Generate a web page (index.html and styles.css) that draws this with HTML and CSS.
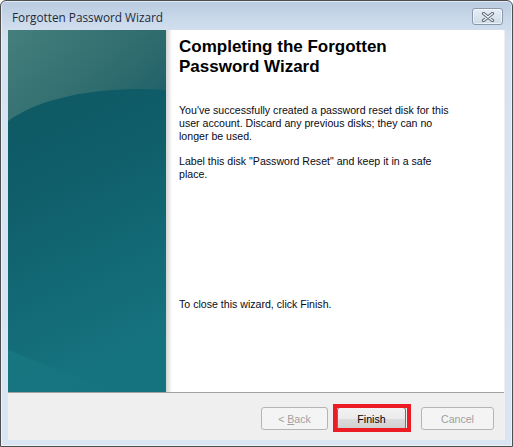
FILE: index.html
```html
<!DOCTYPE html>
<html>
<head>
<meta charset="utf-8">
<link rel="stylesheet" href="styles.css">
</head>
<body>
<div class="window">
  <div class="titlebar">
    <span class="title">Forgotten Password Wizard</span>
    <button class="close" aria-label="Close">
      <svg width="14" height="10" viewBox="0 0 14 10">
        <path d="M2.5 1.5 L11.5 8.5 M11.5 1.5 L2.5 8.5" stroke="#5a6470" stroke-width="3.2" stroke-linecap="round"/>
        <path d="M2.5 1.5 L11.5 8.5 M11.5 1.5 L2.5 8.5" stroke="#ffffff" stroke-width="1.2" stroke-linecap="round"/>
      </svg>
    </button>
  </div>
  <div class="client">
    <div class="main">
      <div class="banner">
        <svg width="158" height="362" viewBox="0 0 158 362">
          <defs>
            <linearGradient id="base" x1="0" y1="0" x2="0.2" y2="1">
              <stop offset="0" stop-color="#0d5660"/>
              <stop offset="0.45" stop-color="#0f5e6a"/>
              <stop offset="1" stop-color="#15737f"/>
            </linearGradient>
            <linearGradient id="gloss" x1="0" y1="0" x2="1" y2="0.6">
              <stop offset="0" stop-color="#447f7c"/>
              <stop offset="0.6" stop-color="#336f70"/>
              <stop offset="1" stop-color="#22636a"/>
            </linearGradient>
            <linearGradient id="low" x1="0" y1="0" x2="1" y2="1">
              <stop offset="0" stop-color="#1c8589" stop-opacity="0.45"/>
              <stop offset="1" stop-color="#167882" stop-opacity="0"/>
            </linearGradient>
          </defs>
          <rect width="158" height="362" fill="url(#base)"/>
          <path d="M0 0 H158 V60 C110 56 40 62 0 91 Z" fill="url(#gloss)"/>
          <path d="M0 320 C40 336 80 352 110 362 H0 Z" fill="url(#low)"/>
        </svg>
      </div>
      <div class="shade"></div>
      <div class="content">
        <h1 class="heading">Completing the Forgotten Password Wizard</h1>
        <p class="text">You've successfully created a password reset disk for this user account. Discard any previous disks; they can no longer be used.</p>
        <p class="text gap">Label this disk "Password Reset" and keep it in a safe place.</p>
        <p class="text closing">To close this wizard, click Finish.</p>
      </div>
    </div>
    <div class="footer">
      <button class="btn back" disabled>&lt; <u>B</u>ack</button>
      <button class="btn finish">Finish</button>
      <button class="btn cancel" disabled>Cancel</button>
      <div class="highlight"></div>
    </div>
  </div>
</div>
</body>
</html>
```

FILE: styles.css
```css
* { box-sizing: border-box; }
html, body { margin: 0; padding: 0; }
body {
  width: 513px;
  height: 447px;
  background: #ffffff;
  overflow: hidden;
}
.window {
  width: 513px;
  height: 447px;
  border: 1px solid #4e4e4e;
  border-radius: 6px 6px 0 0;
  background: linear-gradient(to bottom, #b9cbe0 0px, #cbdaeb 20px, #d6e3f2 40px, #d9e5f3 100%);
  padding: 0 7px 6px 7px;
  display: flex;
  flex-direction: column;
  box-shadow: inset 0 0 0 1px rgba(255,255,255,0.55);
}
.titlebar {
  height: 29px;
  display: flex;
  align-items: center;
  justify-content: space-between;
  padding-left: 4px;
  padding-top: 3px;
}
.title {
  font-family: "Open Sans", "Noto Sans", sans-serif;
  font-size: 11.8px;
  color: #1e2a3a;
}
.close {
  width: 31px;
  height: 17px;
  margin-right: 2px;
  margin-top: -1px;
  padding: 0;
  border: 1px solid #8a98aa;
  border-radius: 3px;
  background: linear-gradient(to bottom, #e6edf5, #cfdbe9);
  box-shadow: inset 0 0 0 1px rgba(255,255,255,0.6);
  display: flex;
  align-items: center;
  justify-content: center;
}
.client {
  flex: 1;
  display: flex;
  flex-direction: column;
  background: #efefef;
}
.main {
  display: flex;
  background: #ffffff;
  border-bottom: 1px solid #a0a0a0;
  height: 363px;
  margin-right: 1px;
}
.banner {
  width: 158px;
  height: 362px;
  flex: none;
}
.banner svg { display: block; }
.shade {
  width: 6px;
  flex: none;
  background: linear-gradient(to right, #d4d4d4, #ececec 60%, #ffffff);
}
.content {
  flex: 1;
  padding: 7px 0 0 7px;
  font-family: "Liberation Sans", Arial, sans-serif;
  color: #000000;
}
.heading {
  margin: 0;
  font-size: 17px;
  font-weight: bold;
  line-height: 20px;
  width: 240px;
  color: #000;
}
.text {
  margin: 0;
  font-size: 10.6px;
  line-height: 13px;
  width: 282px;
  color: #0a0a14;
}
.heading + .text { margin-top: 27px; }
.gap { margin-top: 12px; }
.closing { margin-top: 117px; }
.footer {
  position: relative;
  flex: 1;
  display: flex;
  justify-content: flex-end;
  align-items: flex-start;
  padding: 14px 11px 0 0;
}
.btn {
  height: 23px;
  font-family: "Liberation Sans", Arial, sans-serif;
  font-size: 10.6px;
  padding: 0;
  border-radius: 3px;
}
.back {
  width: 67px;
  margin-right: 9px;
  border: 1px solid #b5b5b5;
  background: #f4f4f4;
  color: #a0a0a0;
}
.back u { text-decoration: underline; }
.finish {
  width: 69px;
  margin-right: 15px;
  border: 1px solid #707070;
  background: linear-gradient(to bottom, #f2f2f2 0%, #ebebeb 50%, #dddddd 51%, #cfcfcf 100%);
  color: #000;
}
.cancel {
  width: 73px;
  border: 1px solid #b5b5b5;
  background: #f4f4f4;
  color: #a0a0a0;
}
.highlight {
  position: absolute;
  left: 325px;
  top: 11px;
  width: 78px;
  height: 28px;
  border: 4px solid #ec1c24;
  pointer-events: none;
}
```
